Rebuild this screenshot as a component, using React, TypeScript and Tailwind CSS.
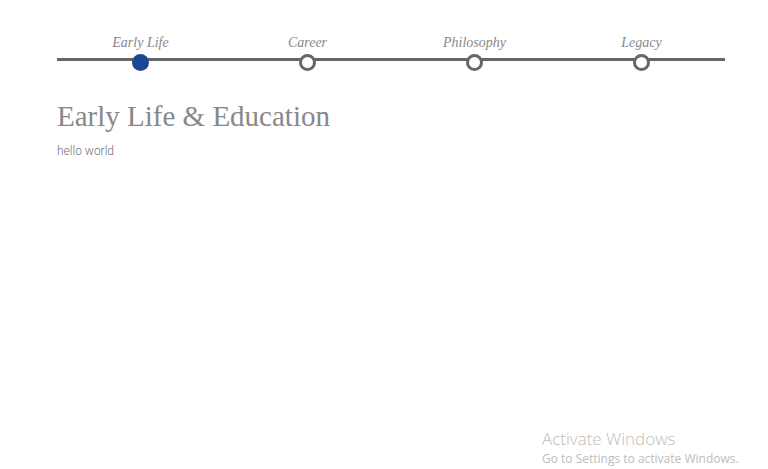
const steps = [
  { label: "Early Life", active: true },
  { label: "Career", active: false },
  { label: "Philosophy", active: false },
  { label: "Legacy", active: false },
]

export default function App() {
  return (
    <div className="relative min-h-[469px] w-full bg-white overflow-hidden">
      <div className="pt-[34px] pl-[57px]">
        {/* timeline */}
        <div className="relative w-[668px]">
          <div className="absolute left-0 right-0 top-[24px] h-[3px] bg-[#666]" />
          <div className="relative grid grid-cols-4">
            {steps.map((s) => (
              <div key={s.label} className="flex flex-col items-center">
                <span className="text-[14px] leading-[18px] italic text-[#888] font-['Liberation_Serif',serif]">
                  {s.label}
                </span>
                <span
                  className={
                    s.active
                      ? "mt-[2px] block w-[17px] h-[17px] rounded-full bg-[#1a4694]"
                      : "mt-[2px] block w-[17px] h-[17px] rounded-full bg-white border-[3px] border-[#666]"
                  }
                />
              </div>
            ))}
          </div>
        </div>

        <h1 className="mt-[27px] text-[29px] leading-[36px] text-[#888] font-['Liberation_Serif',serif]">
          Early Life &amp; Education
        </h1>
        <p className="mt-[9px] text-[12px] leading-[16px] font-light text-[#7a6c72] font-['Roboto',sans-serif]">
          hello world
        </p>
      </div>

      {/* activation watermark */}
      <div className="absolute left-[542px] top-[428px] font-['Open_Sans',sans-serif] text-[#bdbdbd]">
        <div className="text-[17px] leading-[22px] font-light">Activate Windows</div>
        <div className="text-[12px] leading-[18px]">Go to Settings to activate Windows.</div>
      </div>
    </div>
  )
}
